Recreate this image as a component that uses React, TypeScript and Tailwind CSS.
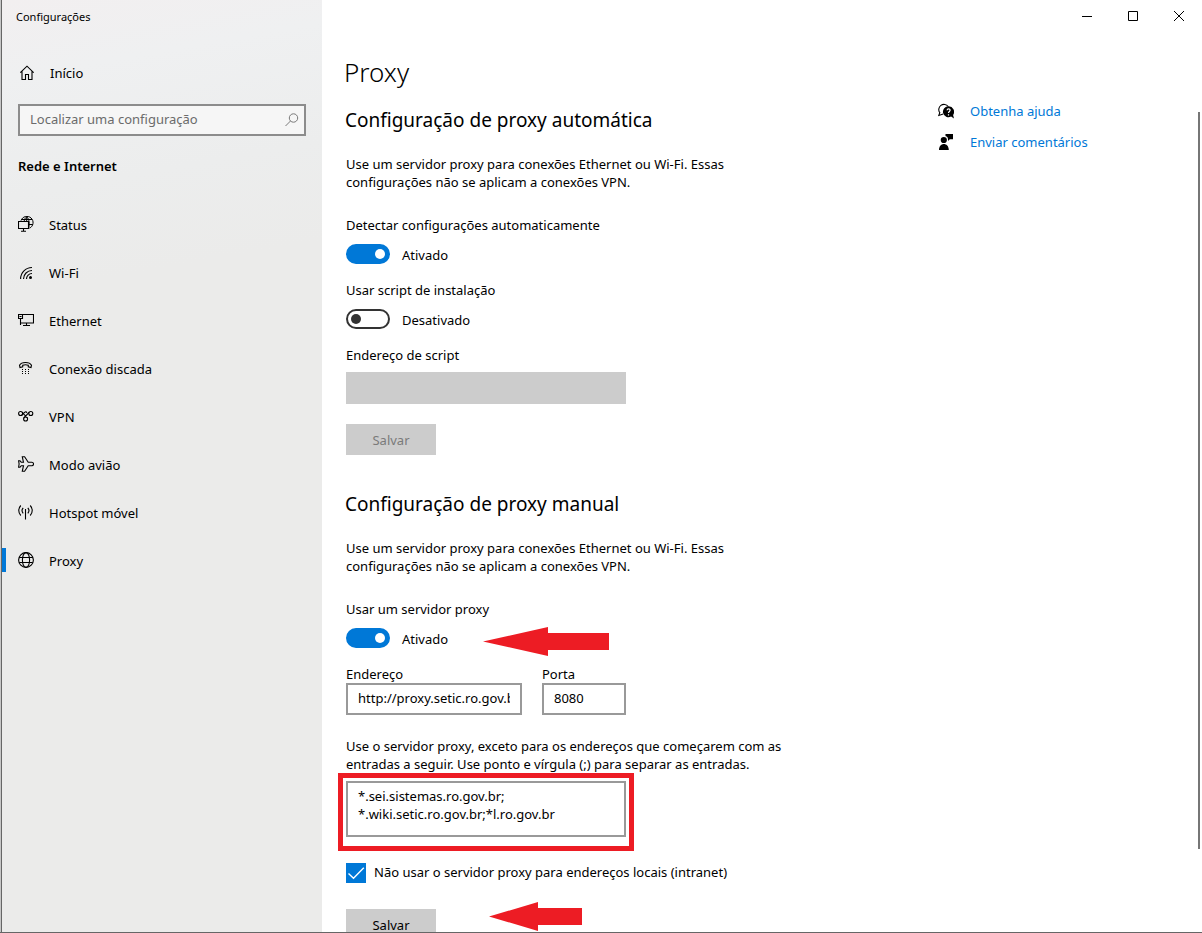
import type { ReactNode } from 'react';

function Icon({ children }: { children: ReactNode }) {
  return (
    <svg
      className="size-4 shrink-0"
      viewBox="0 0 16 16"
      fill="none"
      stroke="currentColor"
      strokeWidth="1.1"
      aria-hidden="true"
    >
      {children}
    </svg>
  );
}

const HomeIcon = () => (
  <Icon>
    <path d="M2.300 7.700 9 1.200 15.700 7.700M4 6.200v8.300H7.500V9.500h3v5H14V6.200" />
  </Icon>
);

const StatusIcon = () => (
  <Icon>
    <path d="M3 4.600A6.200 6.200 0 1 1 11.500 12.200M3.300 3.500h10.800M10.800 8.500h4M8.700.7C7 2 6.300 3.500 6.200 5.500M8.700.7c2.800 2.500 3 8 1.900 11.500M8.700.7v4.800" strokeWidth="1" />
    <path d="M.5 5.500h10v7H.5zM5.500 12.500v2.500M3 15.200h5" />
  </Icon>
);

const WifiIcon = () => (
  <Icon>
    <path d="M2.600 15A11.500 11.500 0 0 1 14 3.500M5.500 15A8.500 8.500 0 0 1 14 6.500M8.500 15A5.500 5.500 0 0 1 14 9.500" />
    <circle cx="12.500" cy="13.500" r="1.500" fill="currentColor" stroke="none" />
  </Icon>
);

const EthernetIcon = () => (
  <Icon>
    <path d="M4.500 2.500h11v8.500H2.500M.5 2.500h4v4h-4zM2.500 6.500v6.500M1.500 4.500h2M8.500 11v2.500M5 13.500h7" />
  </Icon>
);

const DialIcon = () => (
  <Icon>
    <path d="M1.500 5.200C3.500 1.500 11.500 1.500 13.500 5.200L13 7.500 10.300 6.800V5.200C8.500 4.600 6.500 4.600 4.700 5.200V6.800L2 7.500Z" />
    <path d="M4 9.500h1M7 9.500h1M10 9.500h1M4 11.500h1M7 11.500h1M10 11.500h1M4 13.500h1M7 13.500h1M10 13.500h1" />
  </Icon>
);

const VpnIcon = () => (
  <Icon>
    <circle cx="2.600" cy="5.500" r="2" />
    <circle cx="12.800" cy="5.500" r="2" />
    <circle cx="7.600" cy="11" r="2" />
    <path d="M4 4.200 9.400 10M11.300 4.200 5.800 10M4 7 6.600 4.300c1-.9 2-.5 2.300.6" />
  </Icon>
);

const PlaneIcon = () => (
  <Icon>
    <path d="M5.500 6.300 4.300 .8h2.300L10.200 6.300h3.600c2.300 0 2.300 3.400 0 3.400h-3.600L6.600 15.200H4.300L5.500 9.700H3.300L2 11.200H.6L1.100 8 .6 4.800H2L3.300 6.300Z" />
  </Icon>
);

const HotspotIcon = () => (
  <Icon>
    <path d="M7.500 5v10.500M5.200 3.800c-1.300 1.500-1.300 4 0 5.500M9.800 3.800c1.300 1.500 1.300 4 0 5.500M2.800 1.500c-2.700 2.800-2.700 7.200 0 10M12.200 1.500c2.700 2.800 2.700 7.200 0 10" />
  </Icon>
);

const GlobeIcon = () => (
  <Icon>
    <circle cx="8" cy="8" r="7.400" />
    <ellipse cx="8" cy="8" rx="3.600" ry="7.400" />
    <path d="M1.200 5.500h13.600M1.200 10.500h13.600" />
  </Icon>
);

const HelpIcon = () => (
  <Icon>
    <path d="M5.200 11 .8 12.500 1.800 9.700A5.100 5.100 0 1 1 10.200 3.500" />
    <path d="M10.700 3.300a5.500 5.500 0 1 0 2.400 10.300l2.900 2-.9-3.700a5.500 5.500 0 0 0-4.400-8.600Z" fill="currentColor" stroke="none" />
    <path d="M9.100 7.200c.1-2 3.100-1.800 3 .1 0 1.200-1.600 1.300-1.600 2.800M10.500 11.200v1.300" stroke="#fff" strokeWidth="1.200" />
  </Icon>
);

const FeedbackIcon = () => (
  <Icon>
    <g fill="currentColor" stroke="none">
      <circle cx="5.800" cy="6" r="3.100" />
      <path d="M1 16c0-8 9.800-8 9.800 0ZM7.500 0H15v5.200h-3.200L10 7V5.200C9.900 3.500 9 2.500 7.500 2.100Z" />
    </g>
  </Icon>
);

const navItems = [
  { label: 'Status', icon: StatusIcon },
  { label: 'Wi-Fi', icon: WifiIcon },
  { label: 'Ethernet', icon: EthernetIcon },
  { label: 'Conexão discada', icon: DialIcon },
  { label: 'VPN', icon: VpnIcon },
  { label: 'Modo avião', icon: PlaneIcon },
  { label: 'Hotspot móvel', icon: HotspotIcon },
  { label: 'Proxy', icon: GlobeIcon, active: true },
];

function Sidebar() {
  return (
    <aside className="flex w-80 shrink-0 flex-col bg-[#ebebea] bg-[linear-gradient(170deg,#f2eff0_0%,#eff0f1_8%,#eceded_20%,#ebebea_30%)]">
      <div className="px-3.5 pt-2 text-[11px] leading-[18px]">Configurações</div>
      <a href="#inicio" className="mt-[30px] flex h-[34px] items-center gap-4 pr-4 pl-4">
        <HomeIcon />
        Início
      </a>
      <div className="relative mx-4 mt-3.5">
        <input
          type="search"
          aria-label="Localizar uma configuração"
          placeholder="Localizar uma configuração"
          className="h-8 w-full border-2 border-[#8c8c8c] bg-[#f6f6f6] pr-8 pb-0.5 pl-2.5 placeholder:text-[#6b6b6b]"
        />
        <svg
          className="absolute top-2 right-1.5 size-4 text-[#7a7a7a]"
          viewBox="0 0 16 16"
          fill="none"
          stroke="currentColor"
          aria-hidden="true"
        >
          <circle cx="9.500" cy="6" r="4.200" />
          <path d="M6.500 9 1.500 14" />
        </svg>
      </div>
      <h2 className="mt-[21px] px-4 font-semibold">Rede e Internet</h2>
      <nav className="mt-[26px] flex flex-col">
        {navItems.map(({ label, icon: ItemIcon, active }) => (
          <a
            key={label}
            href="#proxy"
            aria-current={active ? 'page' : undefined}
            className="relative flex h-12 items-center gap-[15px] px-4"
          >
            {active && <span className="absolute top-[11px] left-0 h-6 w-1 bg-[#0078d7]" />}
            <span className="mb-0.5"><ItemIcon /></span>
            {label}
          </a>
        ))}
      </nav>
    </aside>
  );
}

function Toggle({ id, label, on }: { id: string; label: string; on?: boolean }) {
  return (
    <>
      <label htmlFor={id} className="self-start">
        {label}
      </label>
      <div className="mt-2.5 flex h-5 items-center gap-3">
        <input
          id={id}
          type="checkbox"
          role="switch"
          defaultChecked={on}
          className="flex h-5 w-11 appearance-none items-center rounded-full border-2 border-[#333] px-[3px] before:size-2.5 before:rounded-full before:bg-[#333] checked:justify-end checked:border-[#0078d7] checked:bg-[#0078d7] checked:before:bg-white"
        />
        <span className="pt-0.5">{on ? 'Ativado' : 'Desativado'}</span>
      </div>
    </>
  );
}

function WindowControls() {
  return (
    <div className="flex h-8 shrink-0 justify-end">
      <button type="button" aria-label="Minimizar" className="flex w-[46px] items-center justify-center">
        <svg className="size-2.5" viewBox="0 0 10 10" stroke="#000"><path d="M0 5.500h10" /></svg>
      </button>
      <button type="button" aria-label="Maximizar" className="flex w-[46px] items-center justify-center">
        <svg className="size-2.5" viewBox="0 0 10 10" stroke="#000" fill="none"><path d="M.5.5h9v9h-9z" /></svg>
      </button>
      <button type="button" aria-label="Fechar" className="flex w-[46px] items-center justify-center">
        <svg className="size-2.5" viewBox="0 0 10 10" stroke="#000"><path d="M0 0 10 10M10 0 0 10" /></svg>
      </button>
    </div>
  );
}

export default function App() {
  return (
    <div className="flex h-screen overflow-hidden border-b border-[#666] bg-white font-['Noto_Sans','Open_Sans',sans-serif] text-[13px] leading-[18px] text-black">
      <div className="w-0.5 shrink-0 border-r border-[#666] bg-[#c6c6c6]" />
      <Sidebar />
      <div className="flex min-w-0 flex-1 flex-col">
        <WindowControls />
        <div className="flex min-h-0 flex-1">
          <main className="flex min-w-0 flex-1 flex-col px-6">
            <h1 className="mt-5 -ml-0.5 text-[26px] leading-10 font-light">Proxy</h1>

            <section className="mt-4 flex flex-col">
              <h2 className="-ml-px text-[19px] leading-6">Configuração de proxy automática</h2>
              <p className="mt-[23px] mb-[25px] max-w-[450px]">
                Use um servidor proxy para conexões Ethernet ou Wi-Fi. Essas configurações não se aplicam a conexões VPN.
              </p>
              <Toggle id="detect" label="Detectar configurações automaticamente" on />
              <div className="mt-[17px] flex flex-col">
                <Toggle id="script" label="Usar script de instalação" />
              </div>
              <label htmlFor="script-url" className="mt-[17px] self-start">Endereço de script</label>
              <input id="script-url" disabled className="mt-2 h-8 w-[280px] bg-[#ccc] px-3" />
              <button type="button" disabled className="mt-5 h-[31px] w-[90px] bg-[#ccc] text-[#7a7a7a]">
                Salvar
              </button>
            </section>

            <section className="mt-[37px] flex flex-col">
              <h2 className="-ml-px text-[19px] leading-6">Configuração de proxy manual</h2>
              <p className="mt-[23px] mb-[25px] max-w-[450px]">
                Use um servidor proxy para conexões Ethernet ou Wi-Fi. Essas configurações não se aplicam a conexões VPN.
              </p>
              <div className="relative flex flex-col">
                <Toggle id="manual" label="Usar um servidor proxy" on />
                <svg className="absolute top-[27px] left-[137px] h-[29px] w-[126px]" viewBox="0 0 126 29" fill="#ed1c24" aria-hidden="true">
                  <path d="M0 14.500 65 0v6h61v17H65v6Z" />
                </svg>
              </div>
              <div className="mt-[17px] flex gap-5">
                <div className="flex w-44 flex-col">
                  <label htmlFor="address">Endereço</label>
                  <input id="address" defaultValue="http://proxy.setic.ro.gov.br" className="h-8 border-2 border-[#999] px-2.5 pb-0.5" />
                </div>
                <div className="flex w-[84px] flex-col">
                  <label htmlFor="port">Porta</label>
                  <input id="port" defaultValue="8080" className="h-8 border-2 border-[#999] px-2.5 pb-0.5" />
                </div>
              </div>
              <label htmlFor="exceptions" className="mt-[22px] max-w-[450px]">
                Use o servidor proxy, exceto para os endereços que começarem com as entradas a seguir. Use ponto e vírgula (;) para separar as entradas.
              </label>
              <div className="relative mt-2 flex w-[280px]">
                <textarea
                  id="exceptions"
                  defaultValue={'*.sei.sistemas.ro.gov.br;\n*.wiki.setic.ro.gov.br;*l.ro.gov.br'}
                  className="h-14 w-full resize-none overflow-hidden border-2 border-[#999] px-2.5 py-1"
                />
                <div className="pointer-events-none absolute -top-2 -left-2 h-[78px] w-[296px] border-5 border-[#ed1c24]" />
              </div>
              <div className="relative mt-[26px] flex h-5 items-center gap-2">
                <input id="local" type="checkbox" defaultChecked className="size-5 appearance-none border-2 border-[#333] checked:border-[#0078d7] checked:bg-[#0078d7]" />
                <svg className="pointer-events-none absolute left-0 size-5" viewBox="0 0 20 20" fill="none" stroke="#fff" strokeWidth="1.400" aria-hidden="true">
                  <path d="M2.500 10.500 7.500 15.200 17.800 4.800" />
                </svg>
                <label htmlFor="local" className="pb-0.5">Não usar o servidor proxy para endereços locais (intranet)</label>
              </div>
              <div className="relative mt-[26px]">
                <button type="button" className="h-[31px] w-[90px] bg-[#ccc]">Salvar</button>
                <svg className="absolute -top-[7px] left-[143px] h-[29px] w-[93px]" viewBox="0 0 93 29" fill="#ed1c24" aria-hidden="true">
                  <path d="M0 14.500 49 0v6h44v17H49v6Z" />
                </svg>
              </div>
            </section>
          </main>

          <div className="flex w-[264px] shrink-0 justify-between pt-[70px]">
            <div className="flex flex-col gap-[13px] text-[#0078d7]">
              <a href="#ajuda" className="flex items-center gap-4">
                <span className="text-black"><HelpIcon /></span>
                Obtenha ajuda
              </a>
              <a href="#comentarios" className="flex items-center gap-4">
                <span className="text-black"><FeedbackIcon /></span>
                Enviar comentários
              </a>
            </div>
            <div className="mt-[10px] mr-0.5 h-[737px] w-0.5 bg-[#767676]" />
          </div>
        </div>
      </div>
    </div>
  );
}
